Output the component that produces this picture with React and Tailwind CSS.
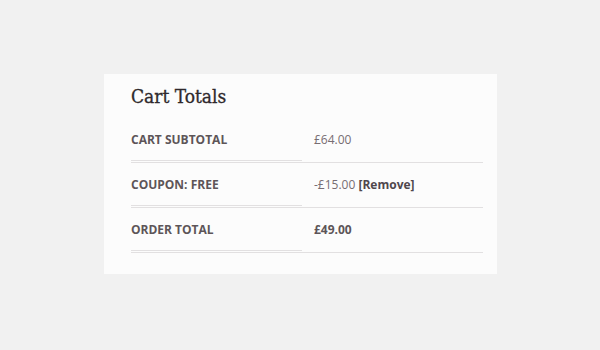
export default function App() {
  const rows = [
    { label: 'Cart Subtotal', value: <span>£64.00</span> },
    {
      label: 'Coupon: FREE',
      value: (
        <span>
          -£15.00 <a className="font-bold text-[#4f474c]">[Remove]</a>
        </span>
      ),
    },
    { label: 'Order Total', value: <strong className="font-bold text-[#5d5558]">£49.00</strong> },
  ]

  return (
    <div className="w-[600px] h-[350px] bg-[#f1f1f1] pt-[74px] pl-[104px]" style={{ fontFamily: '"Open Sans", sans-serif' }}>
      <div className="w-[393px] h-[200px] bg-[#fcfcfc] pl-[27px] pt-[7px]">
        <h2 className="text-[19px] leading-[30px] text-[#2f292c] font-['DejaVu_Serif_Condensed',serif] font-normal [-webkit-text-stroke:0.3px_#2f292c]">
          Cart Totals
        </h2>
        <div className="mt-[7px] w-[352px]">
          {rows.map((r) => (
            <div key={r.label} className="grid grid-cols-[171px_181px] h-[45px]">
              <div className="border-b-[3px] border-double border-[#e2e0e1] flex items-center pt-[1px] text-[12px] font-bold uppercase text-[#5d5558]">
                {r.label}
              </div>
              <div className="border-b border-[#e2e0e1] flex items-center pl-[12px] text-[12px] text-[#776d72]">
                {r.value}
              </div>
            </div>
          ))}
        </div>
      </div>
    </div>
  )
}
